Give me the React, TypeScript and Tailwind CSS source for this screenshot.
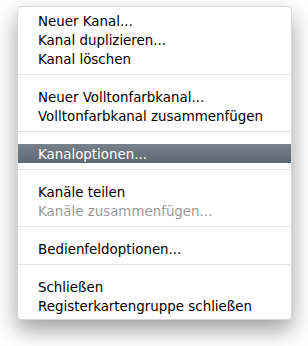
type Item =
  | { kind: "item"; label: string; disabled?: boolean; active?: boolean }
  | { kind: "sep" };

const ITEMS: Item[] = [
  { kind: "item", label: "Neuer Kanal..." },
  { kind: "item", label: "Kanal duplizieren..." },
  { kind: "item", label: "Kanal löschen" },
  { kind: "sep" },
  { kind: "item", label: "Neuer Volltonfarbkanal..." },
  { kind: "item", label: "Volltonfarbkanal zusammenfügen" },
  { kind: "sep" },
  { kind: "item", label: "Kanaloptionen...", active: true },
  { kind: "sep" },
  { kind: "item", label: "Kanäle teilen" },
  { kind: "item", label: "Kanäle zusammenfügen...", disabled: true },
  { kind: "sep" },
  { kind: "item", label: "Bedienfeldoptionen..." },
  { kind: "sep" },
  { kind: "item", label: "Schließen" },
  { kind: "item", label: "Registerkartengruppe schließen" },
];

export default function App() {
  return (
    <div className="w-[308px] h-[346px] bg-white pt-[6px] pl-[17px] font-['DejaVu_Sans',sans-serif]">
      <div className="w-[275px] rounded-[4px] border border-[#d8d8d8] bg-white py-[4px] shadow-[0_10px_22px_rgba(0,0,0,0.38)]">
        {ITEMS.map((it, i) =>
          it.kind === "sep" ? (
            <div key={i} className="h-[19px] pt-[6px]">
              <div className="h-px bg-[#e3e3e3]" />
            </div>
          ) : (
            <div
              key={i}
              className={
                it.active
                  ? "h-[19px] leading-[19px] pt-px pl-[20px] text-[13.4px] text-white bg-gradient-to-b from-[#76818b] to-[#5d6871]"
                  : it.disabled
                    ? "h-[19px] leading-[19px] pt-px pl-[20px] text-[13.4px] text-[#9a9a9a]"
                    : "h-[19px] leading-[19px] pt-px pl-[20px] text-[13.4px] text-black"
              }
            >
              {it.label}
            </div>
          )
        )}
      </div>
    </div>
  );
}
